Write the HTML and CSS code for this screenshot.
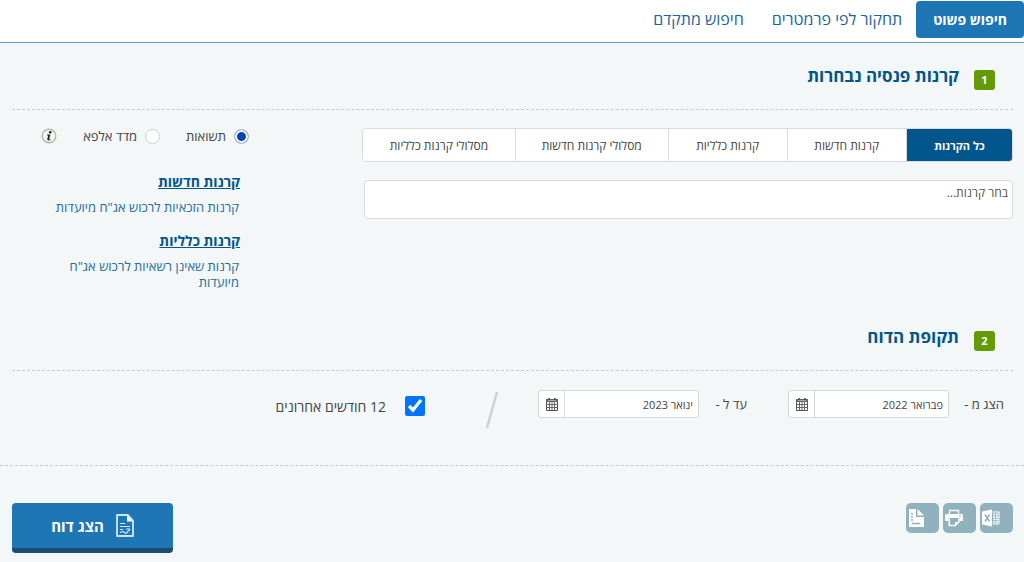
FILE: index.html
```html
<!DOCTYPE html>
<html lang="he" dir="rtl">
<head>
<meta charset="utf-8">
<meta name="viewport" content="width=device-width, initial-scale=1">
<title>חיפוש פשוט</title>
<link rel="stylesheet" href="styles.css">
</head>
<body>
<nav class="topnav">
  <a class="topnav-link active" href="#simple">חיפוש פשוט</a>
  <a class="topnav-link" href="#params">תחקור לפי פרמטרים</a>
  <a class="topnav-link" href="#advanced">חיפוש מתקדם</a>
</nav>
<main>
  <section class="section funds">
    <header class="section-head"><span class="step">1</span><h2>קרנות פנסיה נבחרות</h2></header>
    <div class="funds-body">
      <div class="picker">
        <div class="segments">
          <button class="segment short selected" type="button">כל הקרנות</button>
          <button class="segment medium" type="button">קרנות חדשות</button>
          <button class="segment medium" type="button">קרנות כלליות</button>
          <button class="segment long" type="button">מסלולי קרנות חדשות</button>
          <button class="segment long" type="button">מסלולי קרנות כלליות</button>
        </div>
        <input class="fund-input" type="text" aria-label="בחר קרנות" placeholder="בחר קרנות...">
      </div>
      <aside class="side">
        <div class="measures">
          <label class="measure"><input class="radio" type="radio" name="measure" checked><span>תשואות</span></label>
          <label class="measure"><input class="radio" type="radio" name="measure"><span>מדד אלפא</span></label>
          <button class="info" type="button" aria-label="מידע">
            <svg viewBox="0 0 16 16" width="16" height="16"><circle cx="8" cy="8" r="6.8" fill="#f5f7f3" stroke="#b4b9ae" stroke-width="1.4"/><circle cx="9.2" cy="4.2" r="1.3" fill="#222"/><path d="M6 6.600h3.400L8.200 11c0 .5.5.4 1.300-.3l.3.5c-1.600 1.700-3.900 1.700-3.500-.2L7.200 7.500H6z" fill="#222"/></svg>
          </button>
        </div>
        <a class="side-link" href="#new">קרנות חדשות</a>
        <p class="side-text">קרנות הזכאיות לרכוש אג"ח מיועדות</p>
        <a class="side-link" href="#general">קרנות כלליות</a>
        <p class="side-text">קרנות שאינן רשאיות לרכוש אג"ח מיועדות</p>
      </aside>
    </div>
  </section>
  <section class="section period">
    <header class="section-head"><span class="step">2</span><h2>תקופת הדוח</h2></header>
    <div class="period-body">
      <label class="date-label" for="from">הצג מ -</label>
      <div class="date-field">
        <input class="date-input" id="from" type="text" value="פברואר 2022">
        <button class="date-button" type="button" aria-label="בחר תאריך התחלה"><svg viewBox="0 0 12 13" width="12" height="13"><path d="M.5 1.500h11v11H.5z" fill="#fff" stroke="#555"/><path d="M0 1h12v3H0z" fill="#666"/><path d="M3 0v2M9 0v2" stroke="#444" stroke-width="1.500"/><path d="M2 2.500h8" stroke="#bbb" stroke-width=".8"/><path d="M1 6.500h10M1 9.500h10M3.500 4v8M6 4v8M8.500 4v8" stroke="#666"/></svg></button>
      </div>
      <label class="date-label until" for="to">עד ל -</label>
      <div class="date-field">
        <input class="date-input" id="to" type="text" value="ינואר 2023">
        <button class="date-button" type="button" aria-label="בחר תאריך סיום"><svg viewBox="0 0 12 13" width="12" height="13"><path d="M.5 1.500h11v11H.5z" fill="#fff" stroke="#555"/><path d="M0 1h12v3H0z" fill="#666"/><path d="M3 0v2M9 0v2" stroke="#444" stroke-width="1.500"/><path d="M2 2.500h8" stroke="#bbb" stroke-width=".8"/><path d="M1 6.500h10M1 9.500h10M3.500 4v8M6 4v8M8.500 4v8" stroke="#666"/></svg></button>
      </div>
      <svg class="slash" viewBox="0 0 14 38" width="14" height="38"><path d="M12 1L2 37" stroke="#cfd1d2" stroke-width="2.500"/></svg>
      <label class="last-year"><input class="tick" type="checkbox" checked><span>12 חודשים אחרונים</span></label>
    </div>
  </section>
  <footer class="actions">
    <div class="exports">
      <button class="export" type="button" aria-label="ייצוא לאקסל"><svg viewBox="0 0 18 18" width="18" height="18"><path d="M0 2.500L10 .5v17L0 15.500z" fill="#fff"/><path d="M10.500 3h6.500v12h-6.500" fill="none" stroke="#fff"/><path d="M11 5.500h5M11 8h5M11 10.500h5M11 13h5" stroke="#fff" stroke-width="1.400"/><path d="M13.500 4v10" stroke="#92b1bf" stroke-width=".7"/><path d="M3 5.500l4.500 7M7.500 5.500L3 12.500" stroke="#92b1bf" stroke-width="1.500"/></svg></button>
      <button class="export" type="button" aria-label="הדפסה"><svg viewBox="0 0 18 18" width="18" height="18"><path d="M4.500 5V1.500h9V5" fill="none" stroke="#fff" stroke-width="1.300"/><path d="M1.500 5h15Q18 5 18 6.500V12h-3.500V9h-11v3H0V6.500Q0 5 1.500 5z" fill="#fff"/><path d="M14 7h2" stroke="#92b1bf"/><path d="M4.200 9.500v7h6l3.600-3.500V9.500" fill="none" stroke="#fff" stroke-width="1.500"/><path d="M10 17v-4h4z" fill="#fff"/></svg></button>
      <button class="export" type="button" aria-label="שמירת הדוח"><svg viewBox="0 0 18 18" width="18" height="18"><path d="M1 0h7v8h8v10H1zM9.500 0L16 6.500H9.500z" fill="#fff"/><path d="M3 5h2M3 8h2M3 11h2M4 14.500h8" stroke="#92b1bf" stroke-width="1.600"/></svg></button>
    </div>
    <button class="submit" type="button">
      <svg viewBox="0 0 18 23" width="18" height="23"><path d="M1 1h11l5 5.500V22H1z" fill="none" stroke="#cfe5f5" stroke-width="1.800" stroke-linejoin="round"/><path d="M11 1v6.500h6z" fill="#fff"/><path d="M4 9.500h5M4 12.500h10M4 15.500h3M10 15h4" stroke="#cfe5f5" stroke-width="1.200"/><path d="M4 18.500l3-1 3 2 4-4.500" fill="none" stroke="#cfe5f5" stroke-width="1.200"/></svg>
      <span>הצג דוח</span>
    </button>
  </footer>
</main>
</body>
</html>
```
FILE: styles.css
```css
* { box-sizing: border-box; }
body {
  margin: 0;
  background: #f3f7f8;
  color: #444;
  font-family: "Open Sans", "Liberation Sans", sans-serif;
  font-size: 13px;
}
button, input { font: inherit; color: inherit; }
button { padding: 0; cursor: pointer; }
h2, p { margin: 0; }
svg { display: block; flex: none; }

.topnav {
  display: flex;
  align-items: flex-start;
  height: 43px;
  padding-top: 1px;
  background: #fff;
  border-bottom: 1px solid #5d9cc9;
}
.topnav-link {
  padding: 0 14px;
  border-radius: 4px;
  color: #1a659b;
  font-size: 16px;
  line-height: 37px;
  text-decoration: none;
  white-space: nowrap;
}
.topnav-link.active {
  padding: 0 17px;
  background: #1f76b5;
  color: #fff;
  font-size: 14px;
  font-weight: 700;
}

.section { padding: 0 11px 0 12px; }
.section-head {
  display: flex;
  align-items: center;
  gap: 15px;
  height: 67px;
  padding: 0 18px 0 0;
  border-bottom: 1px dashed #c5caca;
}
.section-head h2 { color: #00558c; font-size: 17px; line-height: 24px; }
.step {
  width: 21px;
  margin-top: 8px;
  border-radius: 3px;
  background: #639a05;
  color: #fff;
  font-size: 11px;
  font-weight: 700;
  line-height: 20px;
  text-align: center;
}

.funds-body {
  display: grid;
  grid-template-columns: 651fr 238fr;
  gap: 112px;
  min-height: 194px;
  padding-top: 18px;
}
.segments {
  display: flex;
  overflow: hidden;
  border: 1px solid #d8dcdd;
  border-radius: 4px;
  background: #fff;
}
.segment {
  height: 32px;
  border: 0;
  border-left: 1px solid #d8dcdd;
  background: #fff;
  font-size: 12px;
  white-space: nowrap;
}
.segment:last-child { border-left: 0; }
.short { flex: 106; }
.medium { flex: 119; }
.long { flex: 153; }
.segment.selected { background: #00558c; color: #fff; font-size: 11px; font-weight: 700; }
.fund-input {
  display: block;
  width: calc(100% - 2px);
  height: 39px;
  margin-top: 18px;
  padding: 0 4px 14px;
  border: 1px solid #d8dcdd;
  border-radius: 4px;
  background: #fff;
  font-size: 12px;
}
.fund-input::placeholder { color: #555; opacity: 1; }

.measures { display: flex; align-items: center; height: 16px; margin-bottom: 29px; padding-right: 1px; }
.measure { display: flex; align-items: center; gap: 8px; margin-left: 26px; white-space: nowrap; }
.radio {
  appearance: none;
  width: 15px;
  height: 15px;
  margin: 0;
  border: 1px solid #ccd0d2;
  border-radius: 50%;
  background: #fff;
}
.radio:checked { border: 1px solid #bcc9ef; background: #0645b0; box-shadow: inset 0 0 0 2px #fff; }
.info { border: 0; background: none; }
.side-link {
  display: block;
  width: fit-content;
  margin-right: 10px;
  color: #00558c;
  font-size: 14px;
  font-weight: 700;
  line-height: 18px;
}
.side-text { margin: 8px 11px 17px 0; color: #266c9c; line-height: 16px; }
.side-text:last-child { max-width: 180px; margin-bottom: 0; }

.period-body { display: flex; align-items: center; height: 94px; padding: 0 9px 28px 0; }
.date-label { width: 42px; margin-left: 13px; white-space: nowrap; }
.date-label.until { width: 35px; margin-right: 41px; }
.date-field {
  display: flex;
  width: 161px;
  height: 28px;
  border: 1px solid #d3d7d8;
  border-radius: 3px;
  background: #fff;
}
.date-input { flex: 1; min-width: 0; padding: 0 5px; border: 0; background: none; font-size: 11px; }
.date-button {
  display: grid;
  place-items: center;
  width: 26px;
  border: 0;
  border-right: 1px solid #d3d7d8;
  background: none;
}
.slash { margin: 12px 39px 0 60px; }
.last-year { display: flex; align-items: center; gap: 19px; margin-top: 4px; font-size: 14px; white-space: nowrap; }
.tick { width: 20px; height: 20px; margin: 0; accent-color: #0075ff; }

.actions {
  display: flex;
  justify-content: space-between;
  align-items: flex-start;
  padding: 37px 11px 8px 12px;
  border-top: 1px dashed #c5caca;
}
.exports { display: flex; gap: 4px; }
.export {
  display: flex;
  align-items: center;
  justify-content: flex-end;
  width: 33px;
  height: 30px;
  padding-left: 2px;
  border: 0;
  border-radius: 5px;
  background: #92b1bf;
}
.submit {
  display: flex;
  align-items: center;
  justify-content: center;
  gap: 12px;
  width: 161px;
  height: 50px;
  border: 0;
  border-bottom: 5px solid #194c70;
  border-radius: 4px;
  background: #1f76b5;
  color: #fff;
  font-size: 15px;
  font-weight: 700;
}
```
